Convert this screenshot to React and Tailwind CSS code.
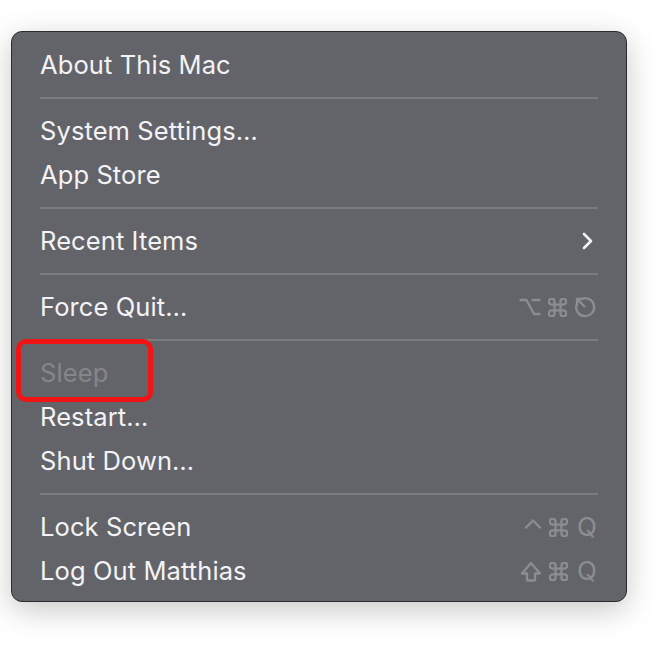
import React from "react";

const font = { fontFamily: 'Inter, "Liberation Sans", "DejaVu Sans", sans-serif' };

const stroke = {
  fill: "none",
  stroke: "currentColor",
  strokeWidth: 2.3,
  strokeLinecap: "round",
  strokeLinejoin: "round",
};

function OptionKey() {
  return (
    <svg width="22" height="18" viewBox="0 0 22 18" {...stroke}>
      <path d="M1.5 2h6l7.5 14h5.5" />
      <path d="M13.5 2h7" />
    </svg>
  );
}

function CommandKey() {
  return (
    <svg width="19" height="19" viewBox="2.3 2.3 19.4 19.4" {...stroke}>
      <path d="M15 6v12a3 3 0 1 0 3-3H6a3 3 0 1 0 3 3V6a3 3 0 1 0-3 3h12a3 3 0 1 0-3-3" />
    </svg>
  );
}

function EscKey() {
  return (
    <svg width="22" height="22" viewBox="0 0 22 22" {...stroke}>
      <path d="M9.2 2.4A9 9 0 1 1 2.4 9.2" />
      <path d="M3 3l7.5 7.5" />
      <path d="M3 8.5V3h5.5" />
    </svg>
  );
}

function ControlKey() {
  return (
    <svg width="18" height="11" viewBox="0 0 18 11" {...stroke}>
      <path d="M2 9.5l7-7 7 7" />
    </svg>
  );
}

function ShiftKey() {
  return (
    <svg width="22" height="22" viewBox="0 0 22 22" {...stroke}>
      <path d="M7 20.5v-7H2L11 3l9 10.5h-5v7z" />
    </svg>
  );
}

function Chevron() {
  return (
    <svg width="14" height="20" viewBox="0 0 14 20" {...stroke} strokeWidth="2.6">
      <path d="M3 3l7 7-7 7" />
    </svg>
  );
}

function Keys({ children }) {
  return <div className="flex items-center gap-[7px] text-[#8c8d92]">{children}</div>;
}

function Item({ label, disabled, right }) {
  return (
    <div className="h-[44px] flex items-center justify-between pl-[28px] pr-[30px]">
      <span className={`text-[25.5px] tracking-[0.1px] ${disabled ? "text-[#85868b]" : "text-[#f3f3f5]"}`}>{label}</span>
      {right}
    </div>
  );
}

function Sep() {
  return (
    <div className="h-[22px] flex items-center pl-[28px] pr-[28px]">
      <div className="h-[2px] w-full bg-[#7b7c81]" />
    </div>
  );
}

export default function App() {
  return (
    <div className="w-[664px] h-[650px] bg-white relative" style={font}>
      <div className="pt-[31px] pl-[11px]">
        <div className="w-[616px] rounded-[11px] bg-[#636469] border border-[#2c2c2e] shadow-[0_8px_30px_rgba(0,0,0,0.22)] pt-[11px] pb-[8px]">
          <Item label="About This Mac" />
          <Sep />
          <Item label="System Settings…" />
          <Item label="App Store" />
          <Sep />
          <Item label="Recent Items" right={<span className="text-[#f3f3f5] mr-[1px]"><Chevron /></span>} />
          <Sep />
          <Item
            label="Force Quit…"
            right={
              <Keys>
                <OptionKey />
                <CommandKey />
                <EscKey />
              </Keys>
            }
          />
          <Sep />
          <Item label="Sleep" disabled />
          <Item label="Restart…" />
          <Item label="Shut Down…" />
          <Sep />
          <Item
            label="Lock Screen"
            right={
              <Keys>
                <span className="mt-[-8px]"><ControlKey /></span>
                <CommandKey />
                <span className="text-[26px] leading-none w-[19px] ml-[2px]">Q</span>
              </Keys>
            }
          />
          <Item
            label="Log Out Matthias"
            right={
              <Keys>
                <ShiftKey />
                <CommandKey />
                <span className="text-[26px] leading-none w-[19px] ml-[2px]">Q</span>
              </Keys>
            }
          />
        </div>
      </div>
      <div className="absolute left-[16px] top-[339px] w-[137px] h-[63px] border-[5px] border-[#f01414] rounded-[10px]" />
    </div>
  );
}
